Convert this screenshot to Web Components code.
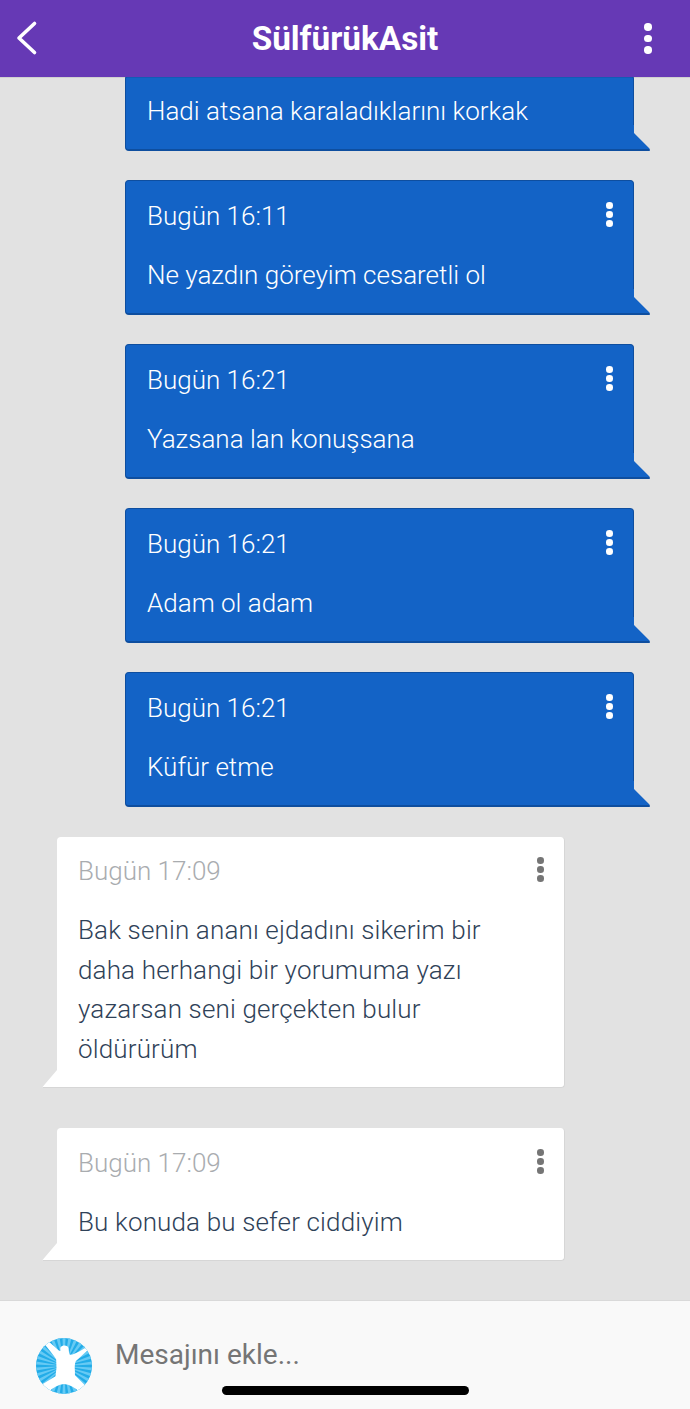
<!DOCTYPE html>
<html lang="tr"><head><meta charset="utf-8"><title>SülfürükAsit</title>
<style>
html,body{margin:0;height:100%;background:#e2e2e2;font-family:Roboto,"Liberation Sans",sans-serif}
</style></head><body>
<chat-app>
  <chat-header slot="header" title-text="SülfürükAsit"></chat-header>
  <chat-bubble kind="out" headless>Hadi atsana karaladıklarını korkak</chat-bubble>
  <chat-bubble kind="out" time="Bugün 16:11">Ne yazdın göreyim cesaretli ol</chat-bubble>
  <chat-bubble kind="out" time="Bugün 16:21">Yazsana lan konuşsana</chat-bubble>
  <chat-bubble kind="out" time="Bugün 16:21">Adam ol adam</chat-bubble>
  <chat-bubble kind="out" class="group-end" time="Bugün 16:21">Küfür etme</chat-bubble>
  <chat-bubble kind="in" time="Bugün 17:09">Bak senin ananı ejdadını sikerim bir<br>daha herhangi bir yorumuma yazı<br>yazarsan seni gerçekten bulur<br>öldürürüm</chat-bubble>
  <chat-bubble kind="in" time="Bugün 17:09">Bu konuda bu sefer ciddiyim</chat-bubble>
  <chat-composer slot="footer" placeholder="Mesajını ekle..."></chat-composer>
</chat-app>
<script>
class ChatApp extends HTMLElement{
  constructor(){super();this.attachShadow({mode:'open'}).innerHTML=`
  <style>
  :host{display:flex;flex-direction:column;width:690px;height:1409px;overflow:hidden;background:#e2e2e2}
  main{flex:1;min-height:0;overflow:hidden;display:flex;flex-direction:column;justify-content:flex-end;padding-bottom:39px}
  </style>
  <slot name="header"></slot>
  <main><slot></slot></main>
  <slot name="footer"></slot>`;}
}
class KebabIcon extends HTMLElement{
  constructor(){super();this.attachShadow({mode:'open'}).innerHTML=`
  <style>:host{display:flex;flex-direction:column;gap:var(--gap,3.4px);align-items:center}
  i{display:block;width:var(--dot,6px);height:var(--dot,6px);border-radius:50%;background:currentColor}</style>
  <i></i><i></i><i></i>`;}
}
class ChatHeader extends HTMLElement{
  constructor(){super();this.attachShadow({mode:'open'}).innerHTML=`
  <style>
  :host{display:flex;align-items:center;justify-content:space-between;height:77px;background:#6639b5;color:#fff;padding:0 38.5px 0 14px;box-sizing:border-box;position:relative;z-index:2;box-shadow:0 1px 0 rgba(0,0,0,.08)}
  h1{margin:0;position:absolute;left:0;right:0;text-align:center;font:700 33.3px/77px Roboto,sans-serif;pointer-events:none}
  svg{display:block;margin-top:-1px}
  kebab-icon{--dot:7.5px;--gap:4px}
  </style>
  <svg width="24" height="36" viewBox="0 0 24 36" fill="none" stroke="#fff" stroke-width="3.6" stroke-linecap="round" stroke-linejoin="round"><path d="M20.5 3.5 L5 18 L20.5 32.5"/></svg>
  <h1></h1>
  <kebab-icon></kebab-icon>`;
  this.shadowRoot.querySelector('h1').textContent=this.getAttribute('title-text');}
}
class ChatBubble extends HTMLElement{
  constructor(){super();const k=this.getAttribute('kind'),t=this.getAttribute('time');
  const out=k==='out';
  this.attachShadow({mode:'open'}).innerHTML=`
  <style>
  :host{display:block;box-sizing:border-box;flex:none;position:relative;font:300 26px/39.5px Roboto,sans-serif}
  :host([kind=out]){width:509px;margin:0 0 29px 125px;color:#fff}
  :host(.group-end){margin-bottom:30px}
  :host([kind=in]){width:508px;margin:0 0 40px 57px;color:#2f4258}
  :host([kind=in]:last-of-type){margin-bottom:0}
  .b{background:#1363c6;border-radius:4px 4px 0 4px;border:solid #0e4e9f;border-width:1px 1px 2px 1px;padding:16px 21px 17px}
  :host([kind=in]) .b{background:#fff;border-radius:4px 4px 4px 0;border-width:0 1px 1px 0;border-color:#d6d6d6;padding:15.5px 21px 18px}
  :host([kind=in]) .t{letter-spacing:.15px}
  header{display:flex;justify-content:space-between;align-items:center;margin-bottom:20px}
  :host([kind=in]) header{color:#a9acaf;margin-bottom:19.5px}
  kebab-icon{--dot:6.6px;--gap:2.4px;margin:-4px -1px 0 0}
  :host([kind=in]) kebab-icon{color:#757575}
  svg{position:absolute;bottom:0;display:block}
  </style>
  <div class="b">${t?`<header><span>${t}</span><kebab-icon></kebab-icon></header>`:''}<div class="t"><slot></slot></div></div>
  ${out
    ?`<svg style="right:-16px" width="18" height="26" viewBox="0 0 18 26"><path d="M0 0H2V8L17.5 23.6V26H0Z" fill="#1363c6"/><path d="M0 24H17.6V26H0Z" fill="#0e4e9f"/></svg>`
    :`<svg style="left:-15px" width="18" height="26" viewBox="0 0 18 26"><path d="M15 0V8L0.5 25V26H18V0Z" fill="#fff"/><path d="M0.5 25H18V26H0.5Z" fill="#d6d6d6"/></svg>`}`;}
}
class UserAvatar extends HTMLElement{
  constructor(){super();let rays='';for(let a=0;a<360;a+=12){rays+=`<path d="M120 115 L115 25 L125 25Z" transform="rotate(${a} 120 115)"/>`;}
  this.attachShadow({mode:'open'}).innerHTML=`
  <style>:host{display:block;width:56px;height:56px;flex:none}svg{display:block}</style>
  <svg width="56" height="56" viewBox="38 33 164 164"><defs><clipPath id="c"><circle cx="120" cy="115" r="82"/></clipPath></defs>
  <g clip-path="url(#c)"><rect x="30" y="25" width="180" height="180" fill="#22ace8"/>
  <g fill="#66caf4">${rays}</g>
  <path fill="#fff" d="M62 50 L72 40 L103 68 Q108 72 110 70 Q106 58 118 55 Q134 54 134 68 Q134 76 137 82 Q150 82 182 62 L190 68 L155 100 Q150 108 152 130 L152 142 L182 172 L166 192 Q144 170 120 168 Q96 170 74 192 L58 168 L95 145 Q100 120 97 95 Q85 78 62 50Z"/></g></svg>`;}
}
class ChatComposer extends HTMLElement{
  constructor(){super();this.attachShadow({mode:'open'}).innerHTML=`
  <style>
  :host{display:flex;align-items:flex-start;gap:23px;position:relative;height:109px;box-sizing:border-box;flex:none;background:#f9f9f9;border-top:1px solid #d9d9d9;padding:37px 0 0 36px}
  span{font:400 28px/36px Roboto,sans-serif;color:#757575;margin-top:-1px}
  b{position:absolute;left:222px;top:85px;width:247px;height:9px;border-radius:5px;background:#000}
  </style>
  <user-avatar></user-avatar><span></span><b></b>`;
  this.shadowRoot.querySelector('span').textContent=this.getAttribute('placeholder');}
}
customElements.define('kebab-icon',KebabIcon);
customElements.define('chat-app',ChatApp);
customElements.define('chat-header',ChatHeader);
customElements.define('chat-bubble',ChatBubble);
customElements.define('user-avatar',UserAvatar);
customElements.define('chat-composer',ChatComposer);
</script>
</body></html>
